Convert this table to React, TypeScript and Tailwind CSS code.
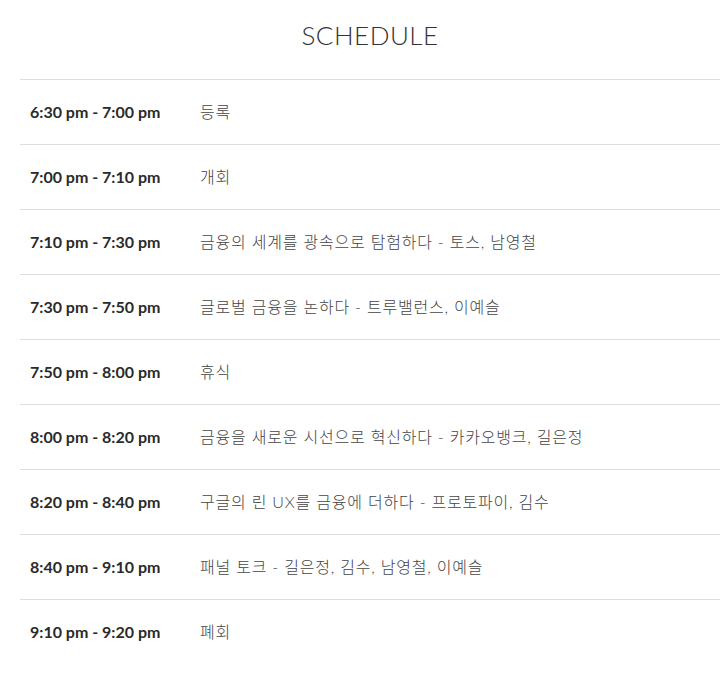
const schedule = [
  { time: "6:30 pm - 7:00 pm", title: "등록" },
  { time: "7:00 pm - 7:10 pm", title: "개회" },
  { time: "7:10 pm - 7:30 pm", title: "금융의 세계를 광속으로 탐험하다 - 토스, 남영철" },
  { time: "7:30 pm - 7:50 pm", title: "글로벌 금융을 논하다 - 트루밸런스, 이예슬" },
  { time: "7:50 pm - 8:00 pm", title: "휴식" },
  { time: "8:00 pm - 8:20 pm", title: "금융을 새로운 시선으로 혁신하다 - 카카오뱅크, 길은정" },
  { time: "8:20 pm - 8:40 pm", title: "구글의 린 UX를 금융에 더하다 - 프로토파이, 김수" },
  { time: "8:40 pm - 9:10 pm", title: "패널 토크 - 길은정, 김수, 남영철, 이예슬" },
  { time: "9:10 pm - 9:20 pm", title: "폐회" },
];

export default function App() {
  return (
    <div className="min-h-[684px] bg-white pl-5 pr-2 font-['Lato','Noto_Sans_CJK_KR',sans-serif]">
      <h2 className="h-[79px] pt-[20px] text-center text-[26px] leading-[30px] font-light tracking-[0.5px] text-[#333]">
        SCHEDULE
      </h2>
      <div>
        {schedule.map((item) => (
          <div key={item.time} className="flex h-[65px] items-center border-t border-[#dedede]">
            <div className="w-[180px] pl-[10px] text-[16px] font-bold text-[#2a2a2a]">{item.time}</div>
            <div className="text-[16px] font-light tracking-[0.8px] text-[#444]">{item.title}</div>
          </div>
        ))}
      </div>
    </div>
  );
}
